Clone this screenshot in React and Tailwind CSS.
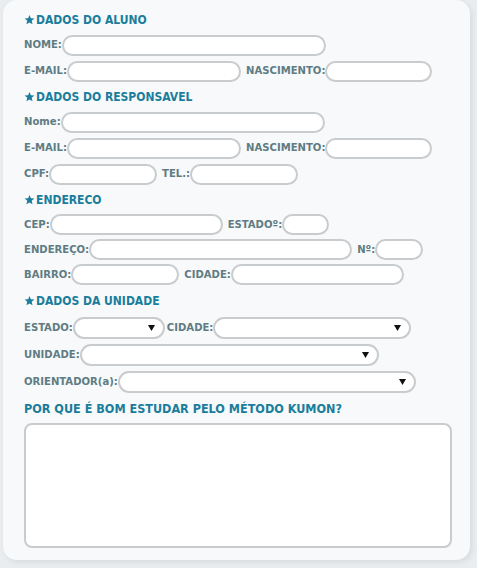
const font = { fontFamily: '"DejaVu Sans Condensed", "DejaVu Sans", sans-serif' };

function Label({ children }) {
    return (
        <span className="text-[11.2px] font-bold text-[#5f7c83] whitespace-nowrap leading-none">
            {children}
        </span>
    );
}

function Input({ w }) {
    return (
        <div
            className={`${w} h-[21px] rounded-full border-2 border-[#c9ccce] bg-white shrink-0`}
        />
    );
}

function Select({ w }) {
    return (
        <div
            className={`${w} h-[22px] rounded-full border-2 border-[#c9ccce] bg-white shrink-0 flex items-center justify-end pr-[8px]`}
        >
            <svg width="7" height="6" viewBox="0 0 7 6">
                <path d="M0 0h7L3.5 6z" fill="#111" />
            </svg>
        </div>
    );
}

function Star() {
    return (
        <svg width="11" height="10" viewBox="0 0 24 23" className="mr-[1px] shrink-0">
            <path
                d="M12 0l3.1 7.6 8.2.6-6.3 5.3 2 8L12 17.2 4.9 21.5l2-8L.7 8.2l8.2-.6z"
                fill="#1a7d9c"
            />
        </svg>
    );
}

function Heading({ children, star = true, h = "h-[25px]", size = "text-[12px]" }) {
    return (
        <div className={`${h} flex items-center ${size} font-bold text-[#1a7d9c] leading-none`}>
            {star && <Star />}
            <span>{children}</span>
        </div>
    );
}

function Row({ children, h = "h-[26px]" }) {
    return <div className={`${h} flex items-center`}>{children}</div>;
}

export default function App() {
    return (
        <div className="w-[477px] h-[568px] bg-[#e9edef] overflow-hidden" style={font}>
            <div className="ml-[3px] mr-[7px] h-[560px] rounded-[14px] bg-[#f7f9fa] shadow-[2px_2px_6px_rgba(0,0,0,0.08)] pl-[21px] pt-[7px]">
                <Heading>DADOS DO ALUNO</Heading>
                <Row>
                    <Label>NOME:</Label>
                    <Input w="w-[264px]" />
                </Row>
                <Row>
                    <Label>E-MAIL:</Label>
                    <Input w="w-[174px]" />
                    <span className="w-[5px]" />
                    <Label>NASCIMENTO:</Label>
                    <Input w="w-[107px]" />
                </Row>
                <Heading>DADOS DO RESPONSAVEL</Heading>
                <Row>
                    <Label>Nome:</Label>
                    <Input w="w-[264px]" />
                </Row>
                <Row>
                    <Label>E-MAIL:</Label>
                    <Input w="w-[174px]" />
                    <span className="w-[5px]" />
                    <Label>NASCIMENTO:</Label>
                    <Input w="w-[107px]" />
                </Row>
                <Row>
                    <Label>CPF:</Label>
                    <Input w="w-[108px]" />
                    <span className="w-[5px]" />
                    <Label>TEL.:</Label>
                    <Input w="w-[108px]" />
                </Row>
                <Heading>ENDERECO</Heading>
                <Row h="h-[25px]">
                    <Label>CEP:</Label>
                    <Input w="w-[173px]" />
                    <span className="w-[5px]" />
                    <Label>ESTADOº:</Label>
                    <Input w="w-[47px]" />
                </Row>
                <Row h="h-[25px]">
                    <Label>ENDEREÇO:</Label>
                    <Input w="w-[263px]" />
                    <span className="w-[5px]" />
                    <Label>Nº:</Label>
                    <Input w="w-[48px]" />
                </Row>
                <Row h="h-[25px]">
                    <Label>BAIRRO:</Label>
                    <Input w="w-[108px]" />
                    <span className="w-[5px]" />
                    <Label>CIDADE:</Label>
                    <Input w="w-[173px]" />
                </Row>
                <Heading h="h-[27px]">DADOS DA UNIDADE</Heading>
                <Row h="h-[27px]">
                    <Label>ESTADO:</Label>
                    <Select w="w-[92px]" />
                    <span className="w-[2px]" />
                    <Label>CIDADE:</Label>
                    <Select w="w-[198px]" />
                </Row>
                <Row h="h-[27px]">
                    <Label>UNIDADE:</Label>
                    <Select w="w-[299px]" />
                </Row>
                <Row h="h-[27px]">
                    <Label>ORIENTADOR(a):</Label>
                    <Select w="w-[298px]" />
                </Row>
                <Heading star={false} h="h-[28px]" size="text-[12.5px]">
                    POR QUE É BOM ESTUDAR PELO MÉTODO KUMON?
                </Heading>
                <div className="w-[428px] h-[125px] rounded-[8px] border-2 border-[#c9ccce] bg-white" />
            </div>
        </div>
    );
}
